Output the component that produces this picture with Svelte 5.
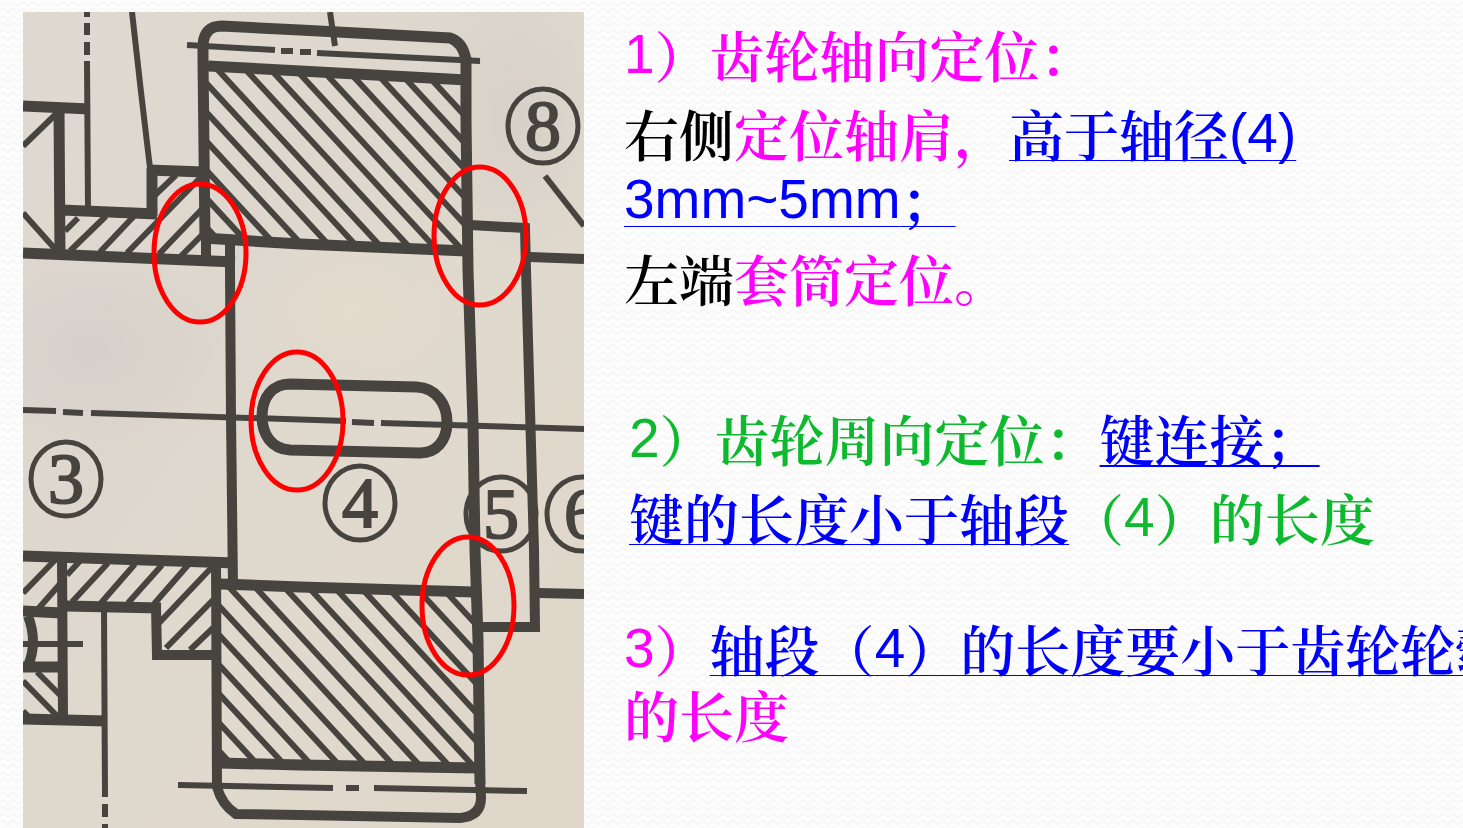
<script>
  const slope = 1.085;
  // Start points of the section hatching; each line runs down to the right until clipped.
  const upperHatch = [
    [432, 80], [405, 78], [380, 77], [353, 76], [327, 75], [300, 74], [274, 73], [247, 71], [218, 70],
    [208, 85], [208, 114], [208, 143], [208, 172], [208, 200], [208, 229]
  ];
  const lowerHatch = [
    [447, 593], [421, 593], [392, 592], [365, 592], [338, 591], [312, 591], [287, 590], [257, 589], [230, 588],
    [221, 608], [221, 637], [221, 667], [221, 696], [221, 725], [221, 753]
  ];
  const hatch = (list) => list.map(([x, y]) => `M${x - 10} ${y - 10 * slope}l300 ${300 * slope}`).join('');

  const balloons = [
    { n: 8, cx: 543, cy: 126 },
    { n: 3, cx: 66, cy: 479 },
    { n: 4, cx: 360, cy: 503 },
    { n: 5, cx: 501, cy: 514 },
    { n: 6, cx: 582, cy: 514 }
  ];
  const marks = [[200, 253], [480, 236], [297, 421], [468, 606]];
</script>

<main class="slide" lang="zh-CN">
  <svg class="drawing" viewBox="23 12 561 816" role="img" aria-label="齿轮">
    <defs>
      <linearGradient id="paper" x1="0" y1="0" x2="1" y2="1">
        <stop offset="0" stop-color="#dfd9d1" />
        <stop offset="0.35" stop-color="#ddd7ce" />
        <stop offset="0.6" stop-color="#e0d9cd" />
        <stop offset="1" stop-color="#dfd6c9" />
      </linearGradient>
      <radialGradient id="shade">
        <stop offset="0" stop-color="#c9c5c1" stop-opacity="0.4" />
        <stop offset="1" stop-color="#c9c5c1" stop-opacity="0" />
      </radialGradient>
      <radialGradient id="glow">
        <stop offset="0" stop-color="#e6dccd" stop-opacity="0.7" />
        <stop offset="1" stop-color="#e6dccd" stop-opacity="0" />
      </radialGradient>
      <clipPath id="upper"><path d="M205 66L467 80V251L205 240Z" /></clipPath>
      <clipPath id="lower"><path d="M219 584L474 592L478 768L219 764Z" /></clipPath>
    </defs>
    <rect x="23" y="12" width="561" height="816" fill="url(#paper)" />
    <ellipse cx="90" cy="350" rx="150" ry="110" fill="url(#shade)" />
    <ellipse cx="520" cy="120" rx="110" ry="150" fill="url(#shade)" />
    <ellipse cx="350" cy="310" rx="130" ry="90" fill="url(#glow)" />

    <g class="ink">
      <g clip-path="url(#upper)"><path class="thin" d={hatch(upperHatch)} /></g>
      <g clip-path="url(#lower)"><path class="thin" d={hatch(lowerHatch)} /></g>

      <!-- bearing and sleeve, upper half -->
      <path class="thin" d="M87 12V17M87 23V35M87 42V55M87 61L88 208M132 12L141 92L150 168" />
      <path class="bold" d="M23 106L90 109M61 210L157 214M148 170L204 172M23 253L235 262" />
      <path class="bold" d="M59 108L60 257M152 168V216" />
      <path class="thin" d="M23 146L56 114M23 213L56 250M65 231L78 218M70 251L106 216M100 252L134 216M127 253L200 178M159 254L203 208M181 256L203 234M154 196L176 175" />

      <!-- gear, upper half -->
      <path class="bold" d="M205 240L203 60V45Q204 26 222 26L300 30L450 38Q463 42 466 60" />
      <path class="bold" d="M208 66L467 80M203 238L300 244L467 251" />
      <path class="medium" d="M206 240V258" />
      <path class="bold" d="M466 57V120L468 270L473 423L475 550L478 640L480 784" />
      <path class="thin" d="M187 45L275 50M281 51L293 51M300 52L311 52M317 53L480 61M330 12L335 46" />

      <!-- shaft shoulder -->
      <path class="medium" d="M230 243V270L231 417L233 587M470 225L525 228L526 270L534 550L535 627H482" />
      <path class="medium" d="M530 257L584 259M538 593L584 594" />
      <path class="thin" d="M545 176L584 226" />

      <!-- keyway and axis -->
      <path class="bold" d="M290 384L417 387C436 388 447 404 447 422C447 441 436 453 420 453L290 450C272 449 262 435 262 416C262 398 272 384 290 384Z" />
      <path class="thin" d="M23 410L56 411M63 412L83 413M91 413L346 421M352 422L374 423M381 423L584 429" />

      <!-- bearing and sleeve, lower half -->
      <path class="bold" d="M23 556L236 563M66 606L161 608M23 611L62 613M23 667H62M23 719L107 721" />
      <path class="medium" d="M62 557L63 720M156 606L157 655H216" />
      <path class="thin" d="M23 644H83M104 608L105 797M105 804V817M105 824V828" />
      <path class="medium" d="M28 616Q38 642 28 666" />
      <path class="thin" d="M23 593L56 559M38 609L60 584M67 575L80 561M72 602L108 563M101 603L135 564M128 603L162 565M154 604L188 565M159 623L213 566M166 648L213 600M190 650L213 628M37 672L60 695M23 681L60 719M23 711L29 717" />

      <!-- gear, lower half -->
      <path class="medium" d="M216 560L217 787Q222 805 236 814L300 815L460 818Q481 816 481 798L480 780" />
      <path class="bold" d="M220 584L300 587L474 592M220 763L300 765L478 768" />
      <path class="thin" d="M178 785L333 788M346 788H359M374 788L527 791" />

      {#each balloons as b}
        <ellipse class="ring" cx={b.cx} cy={b.cy} rx="35" ry="37" />
        <text x={b.cx} y={b.cy + 24}>{b.n}</text>
      {/each}
    </g>

    <g class="marks">
      {#each marks as [cx, cy]}
        <ellipse {cx} {cy} rx="46" ry="69" />
      {/each}
    </g>
  </svg>

  <article class="notes">
    <section>
      <p class="pink"><span class="latin">1</span>）齿轮轴向定位：</p>
      <p>右侧<span class="pink">定位轴肩，</span><u>高于轴径<span class="latin">(4)</span><br /><span class="latin">3mm~5mm</span>；</u></p>
      <p>左端<span class="pink">套筒定位。</span></p>
    </section>
    <section class="inset">
      <p class="green"><span class="latin">2</span>）齿轮周向定位：<u class="bold-line">键连接；</u></p>
      <p class="green"><u>键的长度小于轴段</u>（<span class="latin">4</span>）的长度</p>
    </section>
    <section>
      <p class="pink"><span class="latin">3</span>）<u>轴段（<span class="latin">4</span>）的长度要小于齿轮轮毂</u><br />的长度</p>
    </section>
  </article>

  <svg class="weave" aria-hidden="true">
    <defs>
      <pattern id="wave" width="10" height="7" patternUnits="userSpaceOnUse">
        <path d="M-1 5L2 2L4 2L7 5L9 5L12 2" fill="none" stroke="#f7f7f7" stroke-width="2" />
      </pattern>
    </defs>
    <rect width="100%" height="100%" fill="url(#wave)" />
  </svg>
</main>

<style>
  :global(body) {
    background: #fdfdfd;
    overflow: hidden;
  }
  .slide {
    position: relative;
    z-index: 0;
    display: grid;
    grid-template-columns: minmax(0, 561fr) minmax(0, 839fr);
    column-gap: 40px;
    align-items: start;
    min-height: 100vh;
    padding: 12px 0 0 23px;
    box-sizing: border-box;
    overflow: hidden;
  }
  .weave {
    position: absolute;
    inset: 0;
    z-index: -1;
    width: 100%;
    height: 100%;
  }
  .drawing {
    display: block;
    width: 100%;
    height: auto;
  }
  .ink path,
  .ring {
    fill: none;
    stroke: #474440;
  }
  .ink .thin { stroke-width: 6; }
  .ink .medium { stroke-width: 10; }
  .ink .bold { stroke-width: 11; }
  .ink .ring { stroke-width: 5; }
  .ink text {
    font: 72px "Liberation Serif", serif;
    text-anchor: middle;
    fill: #474440;
    stroke: #474440;
    stroke-width: 2;
  }
  .marks ellipse {
    fill: none;
    stroke: #ff0000;
    stroke-width: 5;
  }
  .notes {
    padding-top: 13px;
    font-family: "Liberation Sans", "Noto Serif CJK SC", "Noto Sans CJK SC", sans-serif;
    font-size: 55px;
    font-weight: 600;
    line-height: 66px;
    color: #000;
    white-space: nowrap;
  }
  section + section {
    margin-top: 65px;
  }
  section.inset {
    margin-top: 94px;
    padding-left: 5px;
  }
  p {
    margin: 0;
  }
  p + p {
    margin-top: 13px;
  }
  .pink { color: #ff00ff; }
  .green { color: #0dba2d; }
  /* Latin glyphs are lighter and sit a little above the ideographic baseline. */
  .latin {
    font-weight: 400;
    vertical-align: 4px;
    line-height: 0;
  }
  u {
    color: #0000ff;
    text-decoration: underline 1px;
    text-underline-offset: 4px;
    text-decoration-skip-ink: none;
  }
  .bold-line {
    text-decoration-thickness: 2px;
  }
</style>
